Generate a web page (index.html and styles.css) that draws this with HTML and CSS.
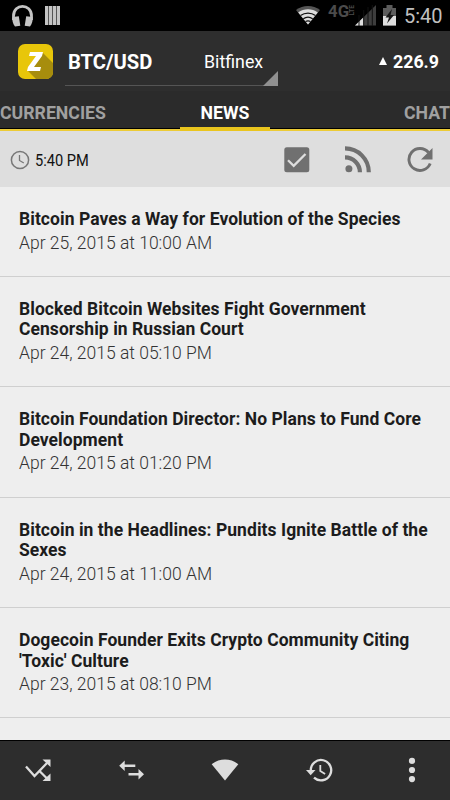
FILE: index.html
```
<!DOCTYPE html>
<html lang="en">
<head>
    <meta charset="UTF-8">
    <meta name="viewport" content="width=device-width, initial-scale=1.0">
    <title>BTC/USD News</title>
    <link rel="stylesheet" href="styles.css">
</head>
<body>
    <div class="status">
        <svg class="headphones" width="24" height="24" viewBox="0 0 24 24">
            <path d="M2.500 16v-4C2.500 -.8 20.500 -.8 20.500 12v4" fill="none" stroke="#c4c4c4" stroke-width="2.800"/>
            <path d="M1.500 13l6.300-.8 1.500 9.500-5.300.8C2 20 .8 16 1.500 13zM21.500 13l-6.300-.8-1.500 9.500 5.300.8c2-2.500 3.200-6.500 2.500-9.500z" fill="#c4c4c4"/>
        </svg>
        <div class="bars"></div>
        <svg class="wifi" width="26" height="20" viewBox="0 0 26 20">
            <path d="M13 19.500L1 5C8-.5 18-.5 25 5z" fill="#555"/>
            <path d="M13 19.500L3.200 7.600C9 3.200 17 3.200 22.800 7.600z" fill="#ddd"/>
            <path d="M5.500 10.500c4.500-3.300 10.500-3.300 15 0M8.300 13.800c2.900-2 6.500-2 9.400 0M10.500 16.600c1.600-.9 3.400-.9 5 0" fill="none" stroke="#111" stroke-width="1.200"/>
        </svg>
        <div class="network"><span class="gen">4G</span><span class="lte">LTE</span></div>
        <svg class="signal" width="22" height="21" viewBox="0 0 22 21">
            <path d="M0 20.500L21 0v20.500z" fill="#3d3d3d"/>
            <path d="M0 20.500L8.500 12.200v8.300z" fill="#ddd"/>
            <path d="M4 10v11M8.700 5v16M13 2v19M17.300 0v21" stroke="#111" stroke-width="1"/>
        </svg>
        <svg class="battery" width="14" height="21" viewBox="0 0 14 21">
            <path d="M0 3h3.500V0h6v3H13v17.500H0z" fill="#5c5c5c"/>
            <path d="M0 11h13v9.500H0z" fill="#ddd"/>
            <path d="M9 4L2.500 12.500h3.500L4 18.500l7-8.500H7.500z" fill="#161616"/>
        </svg>
        <div class="clock">5:40</div>
    </div>
    <div class="header">
        <svg class="logo" width="35" height="35" viewBox="0 0 35 35">
            <rect width="35" height="35" rx="7" fill="#e8c60a"/>
            <path d="M25 9l10 10v9a7 7 0 0 1-7 7h-10L10 27l9-10z" fill="#a78d0d"/>
            <path d="M12 8h13l-1 4-8 11h7l-1 4H9l1-4 8-11h-7z" fill="#fff"/>
        </svg>
        <div class="spinner">
            <div class="pair">BTC/USD</div>
            <div class="exchange">Bitfinex</div>
        </div>
        <div class="price"><span class="up"></span>226.9</div>
    </div>
    <div class="tabs">
        <div class="tab">CURRENCIES</div>
        <div class="tab active">NEWS</div>
        <div class="tab chat">CHAT</div>
    </div>
    <div class="toolbar">
        <svg width="20" height="20" viewBox="0 0 20 20" fill="none" stroke="#777">
            <circle cx="10" cy="10" r="8.600" stroke-width="1.500"/>
            <path d="M9.500 5v5.500l4.300 2.500" stroke-width="1.300"/>
        </svg>
        <div class="time"><span class="narrow">5:40 PM</span></div>
        <svg class="check" width="26" height="26" viewBox="0 0 26 26">
            <rect x=".3" y=".3" width="25" height="25" rx="2.500" fill="#707070"/>
            <path d="M4 13.200l5.700 5.600L21.500 7" fill="none" stroke="#dedede" stroke-width="2.300"/>
        </svg>
        <svg class="rss" width="27" height="27" viewBox="0 0 27 27">
            <circle cx="3.900" cy="22.700" r="3.500" fill="#707070"/>
            <path d="M0 11.300a14.900 14.900 0 0 1 14.900 14.900M0 2.400a23.800 23.800 0 0 1 23.800 23.800" fill="none" stroke="#707070" stroke-width="4.200"/>
        </svg>
        <svg class="refresh" width="26" height="26" viewBox="0 0 26 26">
            <path d="M21.500 5.500A11 11 0 1 0 23.200 16.500" fill="none" stroke="#707070" stroke-width="2.900"/>
            <path d="M25.500 1v11.500H14z" fill="#707070"/>
        </svg>
    </div>
    <div class="news">
        <div class="item">
            <div class="title">Bitcoin Paves a Way for Evolution of the Species</div>
            <div class="date">Apr 25, 2015 at 10:00 AM</div>
        </div>
        <div class="item">
            <div class="title">Blocked Bitcoin Websites Fight Government<br>Censorship in Russian Court</div>
            <div class="date">Apr 24, 2015 at 05:10 PM</div>
        </div>
        <div class="item">
            <div class="title">Bitcoin Foundation Director: No Plans to Fund Core<br>Development</div>
            <div class="date">Apr 24, 2015 at 01:20 PM</div>
        </div>
        <div class="item">
            <div class="title">Bitcoin in the Headlines: Pundits Ignite Battle of the<br>Sexes</div>
            <div class="date">Apr 24, 2015 at 11:00 AM</div>
        </div>
        <div class="item">
            <div class="title">Dogecoin Founder Exits Crypto Community Citing<br>'Toxic' Culture</div>
            <div class="date">Apr 23, 2015 at 08:10 PM</div>
        </div>
    </div>
    <div class="bottom">
        <svg width="28" height="28" viewBox="0 0 28 28">
            <path d="M2 10.500l8.500 9.500L23 7M15.500 15l7.500 7.500" fill="none" stroke="#ddd" stroke-width="2.300"/>
            <path d="M18.500 3.500h8V11zM26.500 17.500V25h-8z" fill="#ddd"/>
        </svg>
        <svg width="28" height="28" viewBox="0 0 28 28">
            <path d="M5 9.800h12.300M10.500 18.200h12" stroke="#ddd" stroke-width="2.600"/>
            <path d="M1.200 9.800l5.500-5.300v10.600zM26 18.200l-5.500-5.300v10.600z" fill="#ddd"/>
        </svg>
        <svg width="28" height="28" viewBox="0 0 28 28">
            <path d="M14 24.500L.7 8.300C8.500 2 19.500 2 27.300 8.300z" fill="#ddd"/>
        </svg>
        <svg width="28" height="28" viewBox="0 0 28 28">
            <path d="M5.800 14.500A10.200 10.200 0 1 1 9 21.600" fill="none" stroke="#ddd" stroke-width="2.300"/>
            <path d="M1 14h9.500l-4.800 5.200z" fill="#ddd"/>
            <path d="M15.300 9v6l4.800 2.900" fill="none" stroke="#ddd" stroke-width="1.800"/>
        </svg>
        <svg width="28" height="28" viewBox="0 0 28 28" fill="#ddd">
            <circle cx="14" cy="4.900" r="3.100"/>
            <circle cx="14" cy="14" r="3.100"/>
            <circle cx="14" cy="23.100" r="3.100"/>
        </svg>
    </div>
</body>
</html>
```
FILE: styles.css
```
* {
    margin: 0;
    padding: 0;
    box-sizing: border-box;
}
body {
    display: flex;
    flex-direction: column;
    width: 450px;
    height: 800px;
    overflow: hidden;
    background: #eeeeee;
    font-family: Roboto, sans-serif;
}
svg {
    display: block;
    flex-shrink: 0;
}
.status {
    display: flex;
    height: 31px;
    flex-shrink: 0;
    background: black;
}
.headphones {
    margin: 4px 0 0 11px;
}
.bars {
    width: 15px;
    height: 19px;
    margin: 6px 0 0 10px;
    background: repeating-linear-gradient(90deg, #c4c4c4 0, #c4c4c4 3px, #555 3px, #555 4px);
}
.wifi {
    margin: 5px 0 0 235px;
}
.network {
    display: flex;
    align-items: flex-start;
    width: 28px;
    margin: 2px 0 0 7px;
    color: #4b4b4b;
    font-size: 16px;
    font-weight: 700;
    line-height: 19px;
}
.gen {
    width: 21px;
    transform: scaleX(1.05);
    transform-origin: left;
}
.lte {
    flex-shrink: 0;
    width: 7px;
    margin-top: 3px;
    font-size: 6.5px;
    line-height: 7px;
    writing-mode: vertical-rl;
    transform: rotate(180deg);
}
.signal {
    margin: 5px 0 0 -1px;
}
.battery {
    margin: 5px 0 0 6px;
}
.clock {
    margin: 4px 0 0 7px;
    color: #c0c0c0;
    font-size: 20px;
    line-height: 25px;
    white-space: nowrap;
}
.header {
    display: flex;
    height: 60px;
    flex-shrink: 0;
    padding-left: 18px;
    background: #2e2e2e;
    color: white;
}
.logo {
    margin-top: 13px;
}
.spinner {
    position: relative;
    display: flex;
    width: 213px;
    height: 55px;
    margin-left: 12px;
    padding-left: 3px;
    border-bottom: 1px solid #555;
    line-height: 24px;
}
.spinner::after {
    content: "";
    position: absolute;
    right: 0;
    bottom: -1px;
    border-left: 15px solid transparent;
    border-bottom: 15px solid #909090;
}
.pair {
    width: 136px;
    margin-top: 19px;
    font-size: 20.2px;
    font-weight: 700;
}
.exchange {
    margin-top: 19px;
    font-size: 17.8px;
}
.price {
    display: flex;
    margin: 19px 0 0 101px;
    font-size: 17.8px;
    font-weight: 700;
    line-height: 24px;
}
.up {
    width: 0;
    height: 0;
    margin: 7px 6px 0 0;
    border-left: 4px solid transparent;
    border-right: 4px solid transparent;
    border-bottom: 8px solid white;
}
.tabs {
    display: flex;
    justify-content: space-between;
    height: 40px;
    flex-shrink: 0;
    background: #2b2b2b;
    border-bottom: 2px solid #eccb36;
    box-shadow: inset 0 -1px black;
}
.tab {
    width: 180px;
    height: 40px;
    color: #a0a0a0;
    font-size: 17.7px;
    font-weight: 700;
    line-height: 44px;
}
.active {
    width: 90px;
    border-bottom: 4px solid #eac51e;
    color: white;
    text-align: center;
}
.chat {
    text-align: right;
}
.toolbar {
    display: flex;
    height: 56px;
    flex-shrink: 0;
    align-items: center;
    padding: 1px 0 0 10px;
    background: #dedede;
}
.time {
    width: 80px;
    margin-left: 5px;
    color: #111;
    font-size: 17px;
    white-space: nowrap;
}
.narrow {
    display: inline-block;
    transform: scaleX(0.86);
    transform-origin: left;
}
.check {
    margin-left: 169px;
}
.rss {
    margin-left: 35px;
}
.refresh {
    margin-left: 35px;
}
.news {
    flex: 1;
    overflow: hidden;
}
.item {
    padding: 22px 19px 22.2px;
    border-bottom: 1px solid #cfcfcf;
}
.title {
    color: #1c1c1c;
    font-size: 17.5px;
    font-weight: 700;
    line-height: 20.6px;
    letter-spacing: 0.05px;
    white-space: nowrap;
}
.date {
    margin-top: 3px;
    color: #333;
    font-size: 17.5px;
    font-weight: 300;
    line-height: 21px;
}
.bottom {
    display: flex;
    justify-content: space-between;
    align-items: center;
    height: 60px;
    flex-shrink: 0;
    padding: 0 24px 2px;
    background: #2d2d2d;
    border-top: 1px solid black;
}
```
